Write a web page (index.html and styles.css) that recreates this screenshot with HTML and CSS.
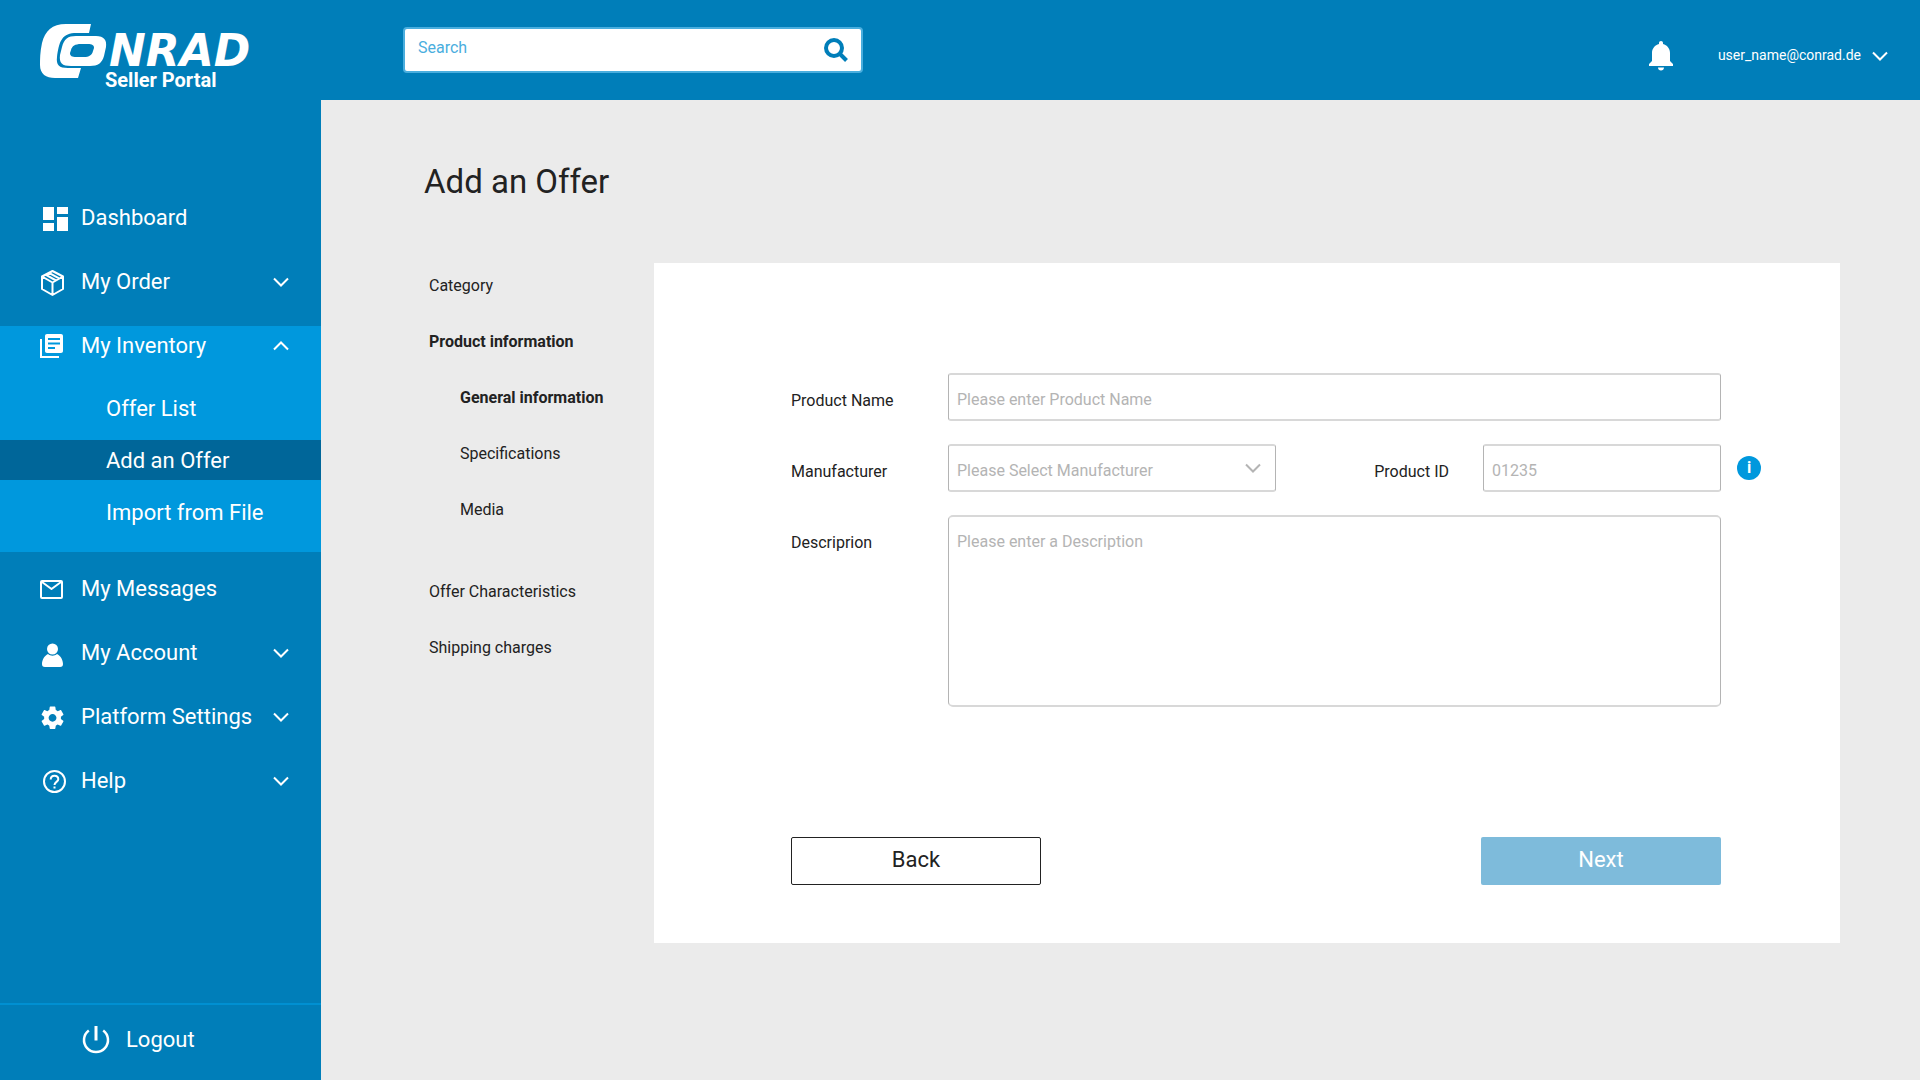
FILE: index.html
```html
<!DOCTYPE html>
<html lang="en">
<head>
<meta charset="utf-8">
<meta name="viewport" content="width=device-width, initial-scale=1">
<title>Add an Offer – Seller Portal</title>
<link rel="stylesheet" href="styles.css">
</head>
<body>
<div class="app">
  <header class="topbar">
    <a class="brand" href="#" aria-label="Conrad Seller Portal">
      <svg class="brand-logo" viewBox="0 0 230 56" aria-hidden="true">
        <path d="M51 1H26C12 1 5 8 2 20C0 29 0 36 0 42C0 51 6 55 15 55H38L41 45H28C19 45 16 42 17 34C19 20 21 11 34 10H49Z"/>
        <path fill-rule="evenodd" d="M36 13H56C64 13 67 17 66 24L64 33C62 40 58 43 50 43H31C22 43 19 40 20 32L22 24C24 16 28 13 36 13ZM41 21C35 21 32 23 31 27L30 30C30 33 32 34 36 34H44C49 34 52 32 53 28L54 25C54 22 52 21 48 21Z"/>
        <text class="brand-word" x="69" y="43">NRAD</text>
      </svg>
      <span class="brand-sub">Seller Portal</span>
    </a>
    <form class="search" role="search">
      <input class="search-input" type="search" placeholder="Search" aria-label="Search">
      <button class="search-button" type="button" aria-label="Search">
        <svg width="24" height="24" viewBox="0 0 24 24" fill="none" stroke="currentColor" aria-hidden="true"><circle cx="10" cy="10" r="8" stroke-width="4"/><path d="M15.500 15.500L22.500 22.500" stroke-width="4"/></svg>
      </button>
    </form>
    <div class="account">
      <button class="icon-button" type="button" aria-label="Notifications">
        <svg width="24" height="30" viewBox="0 0 24 30" fill="currentColor" aria-hidden="true"><path d="M12 0C10.800 0 10 .9 10 2V3C6 4 3 7.500 3 12V20L0 23V25H24V23L21 20V12C21 7.500 18 4 14 3V2C14 .9 13.200 0 12 0ZM9 26.500H15C15 28.200 13.700 29.500 12 29.500S9 28.200 9 26.500Z"/></svg>
      </button>
      <button class="user" type="button"><span class="user-name">user_name@conrad.de</span>
        <svg width="16" height="10" viewBox="0 0 16 10" aria-hidden="true"><path class="chevron" d="M1 1.500L8 8.500L15 1.500"/></svg>
      </button>
    </div>
  </header>

  <aside class="sidebar">
    <nav aria-label="Main">
      <ul class="menu">
        <li><a class="menu-link" href="#">
          <svg class="menu-icon" viewBox="0 0 32 32" fill="currentColor" aria-hidden="true"><path d="M5 6H16V19H5ZM19 6H30V13H19ZM5 22H16V30H5ZM19 16H30V30H19Z"/></svg>
          <span>Dashboard</span></a></li>
        <li><a class="menu-link" href="#">
          <svg class="menu-icon" viewBox="0 0 32 32" fill="none" stroke="currentColor" stroke-width="2" stroke-linejoin="round" aria-hidden="true"><path d="M14.500 6L25 11.500V24L14.500 30L4 24V11.500ZM4 11.500L14.500 17.500L25 11.500M14.500 17.500V30M7.500 9.700L18 15.500M11 7.800L21.500 13.600"/></svg>
          <span>My Order</span>
          <svg class="menu-arrow" viewBox="0 0 16 10" aria-hidden="true"><path class="chevron" d="M1 1.500L8 8.500L15 1.500"/></svg></a></li>
        <li class="menu-group">
          <a class="menu-link menu-link-open" href="#" aria-expanded="true">
            <svg class="menu-icon" viewBox="0 0 32 32" aria-hidden="true"><path fill="none" stroke="currentColor" stroke-width="2" d="M3 10V28H21"/><path fill="currentColor" fill-rule="evenodd" d="M9 5H23C24.200 5 25 5.800 25 7V22C25 23.200 24.200 24 23 24H9C7.800 24 7 23.200 7 22V7C7 5.800 7.800 5 9 5ZM10 9V11H22V9ZM10 13.500V15.500H22V13.500ZM10 18V20H17V18Z"/></svg>
            <span>My Inventory</span>
            <svg class="menu-arrow" viewBox="0 0 16 10" aria-hidden="true"><path class="chevron" d="M1 8.500L8 1.500L15 8.500"/></svg></a>
          <ul class="submenu">
            <li><a class="submenu-link" href="#">Offer List</a></li>
            <li><a class="submenu-link submenu-link-active" href="#" aria-current="page">Add an Offer</a></li>
            <li><a class="submenu-link" href="#">Import from File</a></li>
          </ul>
        </li>
        <li><a class="menu-link" href="#">
          <svg class="menu-icon" viewBox="0 0 32 32" fill="none" stroke="currentColor" stroke-width="2" stroke-linejoin="round" aria-hidden="true"><rect x="3" y="9" width="21" height="17" rx="1"/><path d="M4 10L13.500 17L23 10"/></svg>
          <span>My Messages</span></a></li>
        <li><a class="menu-link" href="#">
          <svg class="menu-icon" viewBox="0 0 32 32" fill="currentColor" aria-hidden="true"><circle cx="14.500" cy="13" r="5.500"/><path d="M10 18C12.500 20.300 16.500 20.300 19 18C22.500 19.500 25 24 25 28C25 29.800 24.200 31 22 31H7C4.800 31 4 29.800 4 28C4 24 6.500 19.500 10 18Z"/></svg>
          <span>My Account</span>
          <svg class="menu-arrow" viewBox="0 0 16 10" aria-hidden="true"><path class="chevron" d="M1 1.500L8 8.500L15 1.500"/></svg></a></li>
        <li><a class="menu-link" href="#">
          <svg class="menu-icon" viewBox="-0.950 -3.900 28.500 28.500" fill="currentColor" aria-hidden="true"><path d="M19.430 12.980c.04-.32.070-.64.070-.98s-.03-.66-.07-.98l2.110-1.650c.19-.15.24-.42.120-.64l-2-3.460c-.12-.22-.39-.3-.61-.22l-2.490 1c-.52-.4-1.080-.73-1.690-.98l-.38-2.650C14.460 2.180 14.250 2 14 2h-4c-.25 0-.46.180-.49.420l-.38 2.650c-.61.250-1.170.590-1.690.980l-2.490-1c-.23-.09-.49 0-.61.220l-2 3.460c-.13.220-.07.490.120.640l2.110 1.650c-.04.320-.07.650-.07.980s.03.660.070.980l-2.110 1.650c-.19.150-.24.420-.12.640l2 3.460c.12.220.390.300.610.220l2.490-1c.52.400 1.080.730 1.690.980l.38 2.650c.03.240.240.420.490.420h4c.25 0 .46-.18.490-.42l.38-2.650c.61-.25 1.170-.59 1.690-.98l2.490 1c.23.090.490 0 .61-.22l2-3.460c.12-.22.070-.49-.12-.64l-2.110-1.650zM12 15.500c-1.930 0-3.500-1.570-3.500-3.500s1.570-3.500 3.500-3.500 3.500 1.570 3.500 3.500-1.570 3.500-3.500 3.500z"/></svg>
          <span>Platform Settings</span>
          <svg class="menu-arrow" viewBox="0 0 16 10" aria-hidden="true"><path class="chevron" d="M1 1.500L8 8.500L15 1.500"/></svg></a></li>
        <li><a class="menu-link" href="#">
          <svg class="menu-icon" viewBox="0 0 32 32" fill="none" stroke="currentColor" stroke-width="2" aria-hidden="true"><circle cx="16.500" cy="17.500" r="10.500"/><path d="M12.700 15.500C12.700 13 14.300 11.700 16.500 11.700S20.300 13.200 20.300 15.200C20.300 17.800 16.500 18 16.500 21M16.500 22.500V24.500"/></svg>
          <span>Help</span>
          <svg class="menu-arrow" viewBox="0 0 16 10" aria-hidden="true"><path class="chevron" d="M1 1.500L8 8.500L15 1.500"/></svg></a></li>
      </ul>
    </nav>
    <a class="logout" href="#">
      <svg width="28" height="30" viewBox="0 0 28 30" fill="none" stroke="currentColor" stroke-width="3" aria-hidden="true"><path d="M14 1V15.500"/><path stroke-width="2.500" d="M6.800 5.500A12 12 0 1 0 21.200 5.500"/></svg>
      <span>Logout</span>
    </a>
  </aside>

  <main class="main">
    <h1 class="title">Add an Offer</h1>
    <div class="content">
      <nav aria-label="Offer steps">
        <ul class="steps">
          <li><a href="#">Category</a></li>
          <li><a class="step-current" href="#">Product information</a>
            <ul class="substeps">
              <li><a class="step-current" href="#" aria-current="step">General information</a></li>
              <li><a href="#">Specifications</a></li>
              <li><a href="#">Media</a></li>
            </ul>
          </li>
          <li><a href="#">Offer Characteristics</a></li>
          <li><a href="#">Shipping charges</a></li>
        </ul>
      </nav>

      <form class="card">
        <label class="label" for="name">Product Name</label>
        <input class="field" id="name" type="text" placeholder="Please enter Product Name">

        <label class="label row-start" for="manufacturer">Manufacturer</label>
        <div class="pair">
          <div class="select">
            <select class="field" id="manufacturer"><option>Please Select Manufacturer</option></select>
            <svg class="select-arrow" width="16" height="10" viewBox="0 0 16 10" aria-hidden="true"><path class="chevron" d="M1 1.500L8 8.500L15 1.500"/></svg>
          </div>
          <div class="product-id">
            <label class="label" for="product-id">Product ID</label>
            <input class="field" id="product-id" type="text" placeholder="01235">
          </div>
        </div>
        <button class="info" type="button" aria-label="About the product ID">i</button>

        <label class="label row-start" for="description">Descriprion</label>
        <textarea class="field description" id="description" placeholder="Please enter a Description"></textarea>

        <div class="actions">
          <button class="button back" type="button">Back</button>
          <button class="button next" type="submit">Next</button>
        </div>
      </form>
    </div>
  </main>
</div>
</body>
</html>
```
FILE: styles.css
```css
:root {
  --blue: #007eb9;
  --blue-light: #0098dd;
  --blue-dark: #006699;
  --ink: #222222;
  --muted: #b4b4b4;
}

* { box-sizing: border-box; }

body {
  margin: 0;
  background: #ebebeb;
  color: var(--ink);
  font: 16px/20px Roboto, "Liberation Sans", sans-serif;
}

ul { margin: 0; padding: 0; list-style: none; }
a { color: inherit; text-decoration: none; }
svg { display: block; flex: none; }
button, input, select, textarea { font: inherit; color: inherit; margin: 0; }
button { padding: 0; border: 0; background: none; cursor: pointer; }

.chevron { fill: none; stroke: currentColor; stroke-width: 2; }

.app {
  display: grid;
  grid-template-columns: 321px 1fr;
  grid-template-rows: 100px 1fr;
  min-height: 100vh;
}

/* Top bar */
.topbar {
  grid-column: 1 / -1;
  display: grid;
  grid-template-columns: 321px 1fr auto;
  background: var(--blue);
  color: #ffffff;
}

.brand { padding: 23px 0 0 40px; }
.brand-logo { width: 230px; height: 56px; fill: currentColor; overflow: visible; }
.brand-word { font: italic bold 44px "DejaVu Sans", sans-serif; }
.brand-sub {
  display: block;
  margin-top: -11px;
  padding-left: 65px;
  font-size: 20px;
  line-height: 24px;
  font-weight: 700;
}

.search {
  display: flex;
  align-items: center;
  align-self: center;
  width: 460px;
  height: 46px;
  margin-left: 82px;
  padding: 0 13px;
  border: 2px solid #4aaede;
  border-radius: 4px;
  background: #ffffff;
  color: var(--blue);
}
.search-input {
  flex: 1;
  min-width: 0;
  padding: 0 0 4px;
  border: 0;
  background: none;
  outline: none;
}
.search-input::placeholder { color: #4aaede; opacity: 1; }

.account {
  display: flex;
  align-items: center;
  gap: 45px;
  padding: 12px 32px 0 0;
}
.user {
  display: flex;
  align-items: center;
  gap: 11px;
  font-size: 14px;
}
.user-name { padding-bottom: 2px; }

/* Sidebar */
.sidebar {
  display: flex;
  flex-direction: column;
  padding-top: 86px;
  background: var(--blue);
  color: #ffffff;
  font-size: 22px;
  line-height: 28px;
}
.menu-link {
  display: flex;
  align-items: center;
  gap: 11px;
  height: 64px;
  padding: 0 32px 0 38px;
}
.menu-icon { width: 32px; height: 32px; margin-bottom: 2px; }
.menu-arrow { width: 16px; height: 10px; margin-left: auto; }
.menu-group {
  margin: 12px 0 5px;
  padding-bottom: 20px;
  background: var(--blue-light);
}
.menu-link-open { height: 40px; }
.submenu {
  display: flex;
  flex-direction: column;
  gap: 12px;
  padding-top: 22px;
}
.submenu-link {
  display: block;
  padding: 7px 0 5px 106px;
}
.submenu-link-active { background: var(--blue-dark); }

.logout {
  display: flex;
  align-items: center;
  gap: 16px;
  height: 77px;
  margin-top: auto;
  padding: 0 32px 6px 82px;
  border-top: 2px solid #0090d2;
}

/* Page */
.main { padding: 62px 80px 40px 103px; }
.title { margin: 0 0 61px; font-size: 33px; line-height: 40px; font-weight: 400; }
.content {
  display: grid;
  grid-template-columns: 230px 1fr;
  align-items: start;
}

.steps {
  display: flex;
  flex-direction: column;
  gap: 36px;
  padding: 13px 0 0 5px;
}
.steps a { display: block; }
.steps .step-current { font-weight: 700; }
.substeps {
  display: flex;
  flex-direction: column;
  gap: 36px;
  padding: 36px 0 26px 31px;
}

.card {
  display: grid;
  grid-template-columns: 141px 1fr 24px;
  gap: 23px 16px;
  padding: 110px 79px 58px 137px;
  background: #ffffff;
}
.row-start { grid-column: 1; }
.label { padding-top: 18px; }

.field {
  display: block;
  width: 100%;
  height: 48px;
  padding: 5px 8px 0;
  border: solid;
  border-width: 2px 1px;
  border-color: #d8d8d8 #b4b4b4;
  border-radius: 3px;
  background: #ffffff;
  outline: none;
}
.field::placeholder { color: var(--muted); opacity: 1; }

.pair { display: flex; justify-content: space-between; }
.select { position: relative; width: 328px; color: var(--muted); }
.select .field { appearance: none; }
.select-arrow { position: absolute; top: 19px; right: 15px; pointer-events: none; }
.product-id { display: grid; grid-template-columns: auto 238px; gap: 34px; }

.info {
  align-self: center;
  width: 24px;
  height: 24px;
  border-radius: 50%;
  background: var(--blue-light);
  color: #ffffff;
  font-weight: 700;
}

.description {
  height: 192px;
  padding-top: 15px;
  border-radius: 5px;
  resize: none;
}

.actions {
  grid-column: 1 / 3;
  display: flex;
  justify-content: space-between;
  margin-top: 107px;
}
.button {
  height: 48px;
  padding-bottom: 3px;
  border-radius: 2px;
  font-size: 22px;
  line-height: 28px;
}
.back { width: 250px; border: 1px solid var(--ink); }
.next { width: 240px; background: #7ebbdb; color: #ffffff; }
```
